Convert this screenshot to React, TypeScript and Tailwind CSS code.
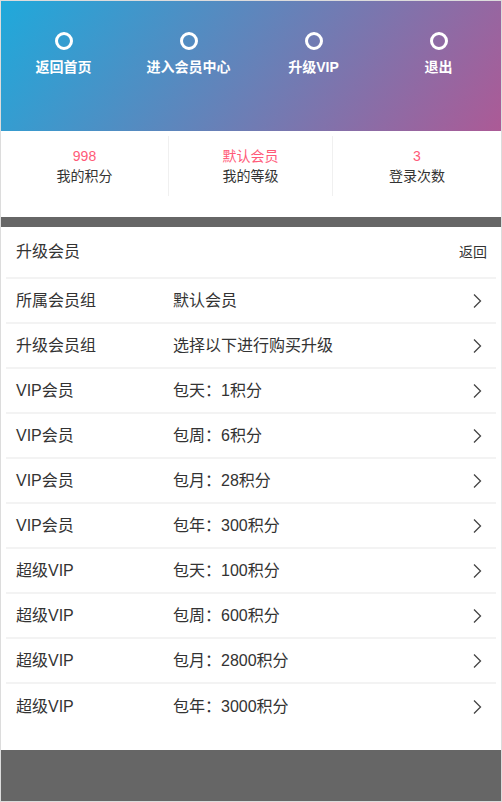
const menu = ["返回首页", "进入会员中心", "升级VIP", "退出"];

const stats = [
  { value: "998", label: "我的积分" },
  { value: "默认会员", label: "我的等级" },
  { value: "3", label: "登录次数" },
];

const rows = [
  { name: "所属会员组", desc: "默认会员" },
  { name: "升级会员组", desc: "选择以下进行购买升级" },
  { name: "VIP会员", desc: "包天：1积分" },
  { name: "VIP会员", desc: "包周：6积分" },
  { name: "VIP会员", desc: "包月：28积分" },
  { name: "VIP会员", desc: "包年：300积分" },
  { name: "超级VIP", desc: "包天：100积分" },
  { name: "超级VIP", desc: "包周：600积分" },
  { name: "超级VIP", desc: "包月：2800积分" },
  { name: "超级VIP", desc: "包年：3000积分" },
];

function Chevron() {
  return (
    <svg width="10" height="16" viewBox="0 0 10 16" className="text-[#444]">
      <polyline points="2,1.5 8.5,8 2,14.5" fill="none" stroke="currentColor" strokeWidth="1.3" />
    </svg>
  );
}

export default function App() {
  return (
    <div
      className="flex h-[802px] flex-col border border-[#dcdcdc] bg-white text-[#333]"
      style={{ fontFamily: '"Liberation Sans", Arial, "Noto Sans CJK SC", sans-serif' }}
    >
      {/* top nav */}
      <div className="grid h-[130px] grid-cols-4 bg-[linear-gradient(125deg,#1fa9db,#ac5a96)] pt-[31px]">
        {menu.map((m) => (
          <div key={m} className="flex flex-col items-center">
            <span className="h-[18px] w-[18px] rounded-full border-[3px] border-white" />
            <span className="mt-[7px] text-[14px] font-bold leading-[20px] text-white">{m}</span>
          </div>
        ))}
      </div>

      {/* stats */}
      <div className="grid h-[86px] grid-cols-[168px_164px_1fr] pt-[5px]">
        {stats.map((s, i) => (
          <div
            key={s.label}
            className={`flex h-[60px] flex-col items-center justify-center ${i < 2 ? "border-r border-[#f0f0f0]" : ""}`}
          >
            <span className="text-[14px] leading-[19px] text-[#ff5a78]">{s.value}</span>
            <span className="text-[14px] leading-[20px] text-[#333]">{s.label}</span>
          </div>
        ))}
      </div>

      <div className="h-[10px] bg-[#666]" />

      {/* upgrade list */}
      <div className="flex flex-1 flex-col px-[5px]">
        <div className="flex h-[52px] items-center justify-between border-b-2 border-[#f3f3f3] pl-[10px] pr-[9px]">
          <span className="text-[16px]">升级会员</span>
          <span className="text-[14px]">返回</span>
        </div>
        {rows.map((r, i) => (
          <div
            key={i}
            className={`flex h-[45px] items-center pl-[10px] pr-[14px] ${i < rows.length - 1 ? "border-b-2 border-[#f3f3f3]" : ""}`}
          >
            <span className="w-[157px] text-[16px]">{r.name}</span>
            <span className="flex-1 text-[16px]">{r.desc}</span>
            <Chevron />
          </div>
        ))}
      </div>

      <div className="h-[51px] bg-[#666]" />
    </div>
  );
}
